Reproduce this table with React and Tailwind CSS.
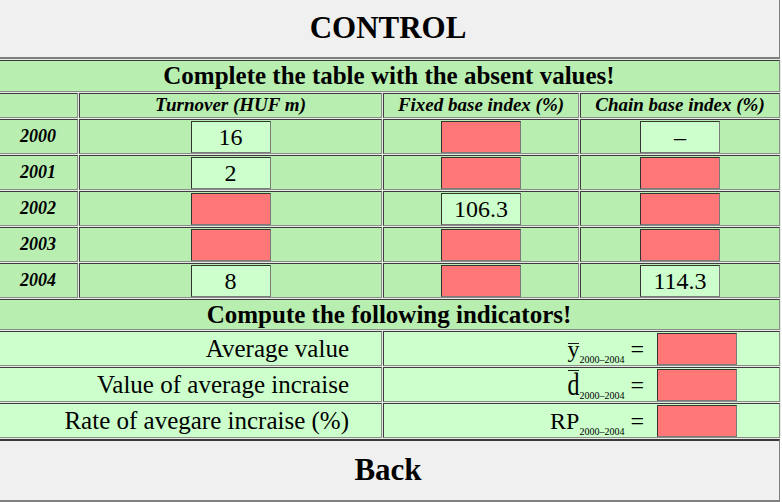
const cell =
  "border border-t-[#3c3c3c] border-l-[#3c3c3c] border-r-[#8c8c8c] border-b-[#8c8c8c]";
const G = "bg-[#b9eeb1]";
const L = "bg-[#ccffcc]";
const R = "bg-[#ff7777]";

function Box({ v }) {
  const red = v === null;
  return (
    <div
      className={`w-[80px] h-[32px] mt-[1px] border border-t-[#333333] border-l-[#333333] border-r-[#7a7a7a] border-b-[#7a7a7a] flex items-center justify-center text-[24px] ${
        red ? R : L
      }`}
    >
      {red ? "" : v}
    </div>
  );
}

const rows = [
  ["2000", "16", null, "–"],
  ["2001", "2", null, null],
  ["2002", null, "106.3", null],
  ["2003", null, null, null],
  ["2004", "8", null, "114.3"],
];

function Sub() {
  return (
    <span className="relative top-[6px] text-[10px] leading-none">2000–2004</span>
  );
}

function Formula({ sym }) {
  let main;
  if (sym === "y") {
    main = (
      <span className="relative">
        y
        <span className="absolute left-[1px] top-[7px] w-[11px] h-[1.5px] bg-[#1a1a1a]"></span>
      </span>
    );
  } else if (sym === "d") {
    main = (
      <span className="relative">
        <span className="inline-block scale-y-[1.32] origin-[center_21px]">d</span>
        <span className="absolute left-[1px] top-[-2px] w-[11px] h-[1.5px] bg-[#1a1a1a]"></span>
      </span>
    );
  } else {
    main = <span>RP</span>;
  }
  return (
    <div className="flex items-center justify-end pr-[42px] text-[24px] whitespace-pre">
      <span>
        {main}
        <Sub />
        {" ="}
      </span>
      <div className="ml-[13px] w-[80px] h-[32px] border border-t-[#333333] border-l-[#333333] border-r-[#7a7a7a] border-b-[#7a7a7a] bg-[#ff7777]"></div>
    </div>
  );
}

export default function App() {
  return (
    <div className="w-[784px] -ml-[3px] font-['Liberation_Serif',serif] text-black">
      <div className="h-[59px] mr-[1px] bg-[#f0f0f0] border-b-2 border-r border-b-[#808080] border-r-[#808080] flex items-center justify-center text-[31px] font-bold">
        CONTROL
      </div>
      <div className="bg-[#e4ece2] p-[1px] grid grid-cols-[80px_303px_196px_200px] gap-[1px]">
        <div
          className={`${cell} ${G} col-span-4 h-[32px] flex items-center justify-center text-[25px] font-bold`}
        >
          Complete the table with the absent values!
        </div>
        <div className={`${cell} ${G} h-[25px]`}></div>
        {["Turnover (HUF m)", "Fixed base index (%)", "Chain base index (%)"].map((t) => (
          <div
            key={t}
            className={`${cell} ${G} h-[25px] flex items-center justify-center text-[19px] font-bold italic whitespace-nowrap`}
          >
            {t}
          </div>
        ))}
        {rows.map((r) => (
          <div key={r[0]} className="contents">
            <div
              className={`${cell} ${G} h-[35px] flex items-center justify-center text-[18px] font-bold italic`}
            >
              {r[0]}
            </div>
            {[1, 2, 3].map((i) => (
              <div key={i} className={`${cell} ${G} h-[35px] flex justify-center items-start`}>
                <Box v={r[i]} />
              </div>
            ))}
          </div>
        ))}
        <div
          className={`${cell} ${G} col-span-4 h-[31px] flex items-center justify-center text-[25px] font-bold`}
        >
          Compute the following indicators!
        </div>
        {[
          ["Average value", "y"],
          ["Value of average incraise", "d"],
          ["Rate of avegare incraise (%)", "RP"],
        ].map(([label, sym]) => (
          <div key={sym} className="contents">
            <div
              className={`${cell} ${L} col-span-2 h-[35px] flex items-center justify-end pr-[32px] text-[25px] whitespace-nowrap`}
            >
              {label}
            </div>
            <div className={`${cell} ${L} col-span-2 h-[35px] flex items-center justify-end`}>
              <Formula sym={sym} />
            </div>
          </div>
        ))}
      </div>
      <div className="h-[63px] mr-[1px] bg-[#f0f0f0] border-t-2 border-b-2 border-r border-t-[#3a3a3a] border-b-[#808080] border-r-[#808080] flex items-center justify-center text-[31px] font-bold">
        Back
      </div>
    </div>
  );
}
